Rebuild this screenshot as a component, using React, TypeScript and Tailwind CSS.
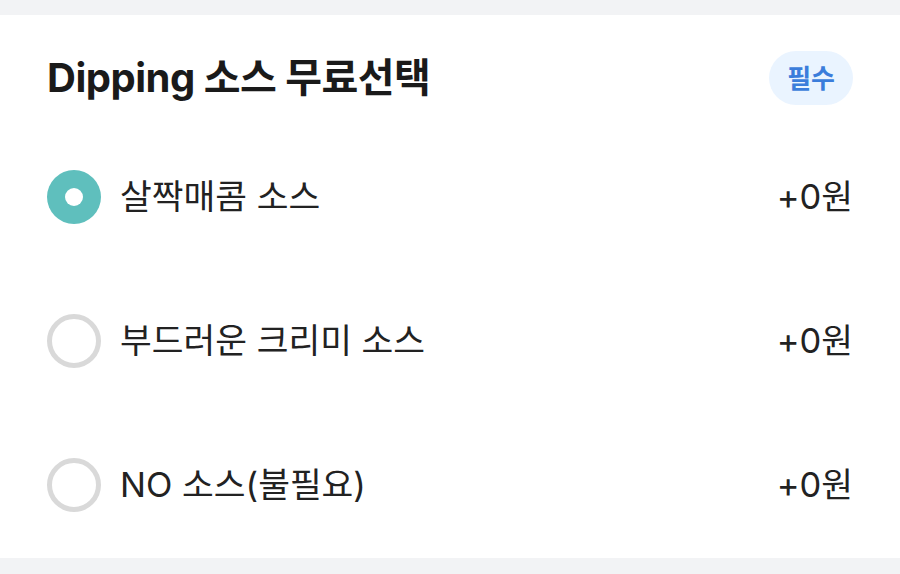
const options = [
  { id: 1, name: "살짝매콤 소스", price: "+0원" },
  { id: 2, name: "부드러운 크리미 소스", price: "+0원" },
  { id: 3, name: "NO 소스(불필요)", price: "+0원" },
];

function Radio({ checked }: { checked: boolean }) {
  if (checked) {
    return (
      <span className="w-[54px] h-[54px] rounded-full bg-[#5fbfbd] flex items-center justify-center shrink-0">
        <span className="w-[18px] h-[18px] rounded-full bg-white" />
      </span>
    );
  }
  return (
    <span className="w-[54px] h-[54px] rounded-full border-[5px] border-[#d9d9d9] bg-white shrink-0" />
  );
}

export default function App() {
  const selected = 1;
  return (
    <div
      className="w-[900px] h-[574px] bg-[#f2f3f5] py-[15px] overflow-hidden"
      style={{ fontFamily: "Inter, 'Noto Sans CJK KR', sans-serif" }}
    >
      <div className="bg-white h-[543px] px-[47px] pt-9">
        <div className="flex items-center justify-between h-[54px]">
          <h2 className="text-[40px] leading-none font-bold text-[#1a1a1a] tracking-[-0.5px]">
            Dipping 소스 무료선택
          </h2>
          <span className="h-[54px] px-[18px] rounded-full bg-[#eaf4ff] text-[#3b7ddb] text-[26px] font-bold flex items-center">
            필수
          </span>
        </div>
        <div className="mt-5">
          {options.map((o) => (
            <div key={o.id} className="h-[144px] flex items-center justify-between">
              <div className="flex items-center gap-[19px]">
                <Radio checked={o.id === selected} />
                <span className="text-[34.5px] text-[#222]">{o.name}</span>
              </div>
              <span className="text-[34.5px] text-[#222]">{o.price}</span>
            </div>
          ))}
        </div>
      </div>
    </div>
  );
}
